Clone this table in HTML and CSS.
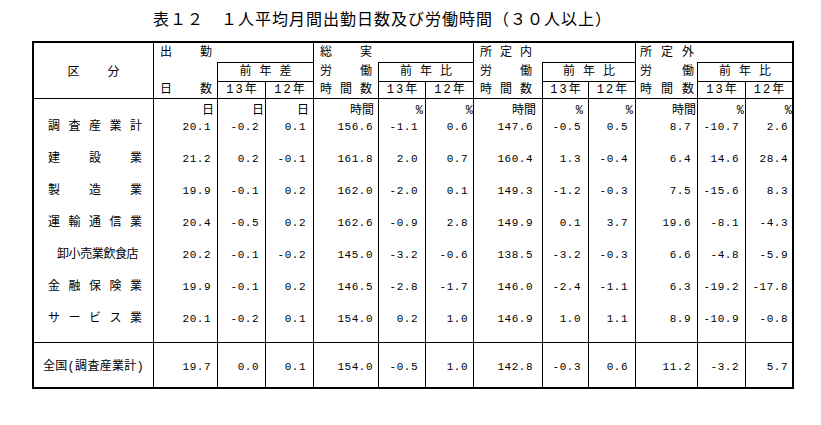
FILE: index.html
```html
<!DOCTYPE html>
<html lang="ja">
<head>
<meta charset="utf-8">
<title>表１２</title>
<link rel="stylesheet" href="styles.css">
</head>
<body>
<div class="page">
  <h1 class="title">表１２　１人平均月間出勤日数及び労働時間（３０人以上）</h1>
  <div class="tbl">
    <div class="kubun"><span>区</span><span>分</span></div>

    <div class="sub"><div class="ln"><span>出</span><span>勤</span></div><div class="ln"></div><div class="ln"><span>日</span><span>数</span></div></div>
    <div class="blank"></div>
    <div class="sub"><div class="ln"><span>総</span><span>実</span></div><div class="ln"><span>労</span><span>働</span></div><div class="ln"><span>時</span><span>間</span><span>数</span></div></div>
    <div class="blank"></div>
    <div class="sub"><div class="ln"><span>所</span><span>定</span><span>内</span></div><div class="ln"><span>労</span><span>働</span></div><div class="ln"><span>時</span><span>間</span><span>数</span></div></div>
    <div class="blank"></div>
    <div class="sub sub-last"><div class="ln"><span>所</span><span>定</span><span>外</span></div><div class="ln"><span>労</span><span>働</span></div><div class="ln"><span>時</span><span>間</span><span>数</span></div></div>
    <div class="blank"></div>

    <div class="cmp"><span>前</span><span>年</span><span>差</span></div>
    <div class="cmp"><span>前</span><span>年</span><span>比</span></div>
    <div class="cmp"><span>前</span><span>年</span><span>比</span></div>
    <div class="cmp"><span>前</span><span>年</span><span>比</span></div>

    <div class="yr">13年</div><div class="yr">12年</div>
    <div class="yr">13年</div><div class="yr">12年</div>
    <div class="yr">13年</div><div class="yr">12年</div>
    <div class="yr">13年</div><div class="yr">12年</div>

    <div class="col lab">
      <div class="u"></div>
      <div class="v"><span>調</span><span>査</span><span>産</span><span>業</span><span>計</span></div>
      <div class="v"><span>建</span><span>設</span><span>業</span></div>
      <div class="v"><span>製</span><span>造</span><span>業</span></div>
      <div class="v"><span>運</span><span>輸</span><span>通</span><span>信</span><span>業</span></div>
      <div class="v v-tight">卸小売業飲食店</div>
      <div class="v"><span>金</span><span>融</span><span>保</span><span>険</span><span>業</span></div>
      <div class="v"><span>サ</span><span>ー</span><span>ビ</span><span>ス</span><span>業</span></div>
    </div>
    <div class="col num u3"><div class="u">日</div><div class="v">20.1</div><div class="v">21.2</div><div class="v">19.9</div><div class="v">20.4</div><div class="v">20.2</div><div class="v">19.9</div><div class="v">20.1</div></div>
    <div class="col num u1"><div class="u">日</div><div class="v">-0.2</div><div class="v">0.2</div><div class="v">-0.1</div><div class="v">-0.5</div><div class="v">-0.1</div><div class="v">-0.1</div><div class="v">-0.2</div></div>
    <div class="col num u4 n7"><div class="u">日</div><div class="v">0.1</div><div class="v">-0.1</div><div class="v">0.2</div><div class="v">0.2</div><div class="v">-0.2</div><div class="v">0.2</div><div class="v">0.1</div></div>
    <div class="col num u4 n5"><div class="u">時間</div><div class="v">156.6</div><div class="v">161.8</div><div class="v">162.0</div><div class="v">162.6</div><div class="v">145.0</div><div class="v">146.5</div><div class="v">154.0</div></div>
    <div class="col num n7"><div class="u">%</div><div class="v">-1.1</div><div class="v">2.0</div><div class="v">-2.0</div><div class="v">-0.9</div><div class="v">-3.2</div><div class="v">-2.8</div><div class="v">0.2</div></div>
    <div class="col num u0 n5"><div class="u">%</div><div class="v">0.6</div><div class="v">0.7</div><div class="v">0.1</div><div class="v">2.8</div><div class="v">-0.6</div><div class="v">-1.7</div><div class="v">1.0</div></div>
    <div class="col num u6 n9"><div class="u">時間</div><div class="v">147.6</div><div class="v">160.4</div><div class="v">149.3</div><div class="v">149.9</div><div class="v">138.5</div><div class="v">146.0</div><div class="v">146.9</div></div>
    <div class="col num u5 n7"><div class="u">%</div><div class="v">-0.5</div><div class="v">1.3</div><div class="v">-1.2</div><div class="v">0.1</div><div class="v">-3.2</div><div class="v">-2.4</div><div class="v">1.0</div></div>
    <div class="col num n7"><div class="u">%</div><div class="v">0.5</div><div class="v">-0.4</div><div class="v">-0.3</div><div class="v">3.7</div><div class="v">-0.3</div><div class="v">-1.1</div><div class="v">1.1</div></div>
    <div class="col num u1"><div class="u">時間</div><div class="v">8.7</div><div class="v">6.4</div><div class="v">7.5</div><div class="v">19.6</div><div class="v">6.6</div><div class="v">6.3</div><div class="v">8.9</div></div>
    <div class="col num u1"><div class="u">%</div><div class="v">-10.7</div><div class="v">14.6</div><div class="v">-15.6</div><div class="v">-8.1</div><div class="v">-4.8</div><div class="v">-19.2</div><div class="v">-10.9</div></div>
    <div class="col num u0 n4"><div class="u">%</div><div class="v">2.6</div><div class="v">28.4</div><div class="v">8.3</div><div class="v">-4.3</div><div class="v">-5.9</div><div class="v">-17.8</div><div class="v">-0.8</div></div>

    <div class="tot tot-lab">全国(調査産業計)</div>
    <div class="tot">19.7</div>
    <div class="tot">0.0</div>
    <div class="tot n7">0.1</div>
    <div class="tot n5">154.0</div>
    <div class="tot n7">-0.5</div>
    <div class="tot n5">1.0</div>
    <div class="tot n9">142.8</div>
    <div class="tot n7">-0.3</div>
    <div class="tot n7">0.6</div>
    <div class="tot">11.2</div>
    <div class="tot">-3.2</div>
    <div class="tot n4">5.7</div>
  </div>
</div>
</body>
</html>
```

FILE: styles.css
```css
* {
  box-sizing: border-box;
  margin: 0;
  padding: 0;
}

html, body {
  background: #fff;
  color: #000;
}

body {
  font-family: "Noto Sans CJK JP", sans-serif;
}

.page {
  padding: 8px 0 0 32px;
}

.title {
  font-family: "Noto Sans CJK JP", sans-serif;
  font-size: 16px;
  font-weight: normal;
  line-height: 20px;
  letter-spacing: 1px;
  margin: 0 0 13px 121px;
  white-space: nowrap;
}

.tbl {
  display: grid;
  width: 762px;
  grid-template-columns: 119px 63px 47px 47px 64px 46px 47px 68px 45px 46px 61px 47px 46px;
  grid-template-rows: 19px 18px 16px 243px 44px;
  gap: 1px;
  background: #000;
  border: 2px solid #000;
  font-family: "Liberation Mono", "Noto Sans CJK JP", monospace;
  font-size: 12px;
  line-height: 16px;
}

.tbl > div {
  background: #fff;
}

/* header */
.kubun {
  grid-row: span 3;
  display: flex;
  justify-content: center;
  align-items: center;
  gap: 28px;
  padding-top: 4px;
}

.sub {
  grid-row: span 3;
  display: grid;
  grid-template-rows: 19px 19px 17px;
  align-items: center;
  padding-left: 6px;
}

.sub-last {
  padding-left: 4px;
}

.ln {
  display: flex;
  justify-content: space-between;
  width: 52px;
  height: 16px;
}

.sub-last .ln {
  width: 54px;
}

/* top-right cell of each group: merges with the group's first column */
.blank {
  grid-column: span 2;
  margin-left: -1px;
}

.cmp {
  grid-column: span 2;
  display: flex;
  justify-content: center;
  align-items: center;
  gap: 8px;
}

.yr {
  display: flex;
  justify-content: center;
  align-items: center;
  letter-spacing: 2px;
  padding-left: 2px;
}

/* body */
.col {
  padding-top: 4px;
}

.col .u {
  height: 16px;
  text-align: right;
  padding-right: 2px;
}

.col .v {
  height: 32px;
}

.num .v {
  text-align: right;
  padding-right: 6px;
  font-size: 11px;
  letter-spacing: 0.5px;
}

.lab .v {
  display: flex;
  justify-content: space-between;
  padding: 0 11px 0 14px;
}

.lab .v-tight {
  display: block;
  padding: 0 14px 0 23px;
  letter-spacing: -0.4px;
}

.u0 .u { padding-right: 0; }
.u1 .u { padding-right: 1px; }
.u3 .u { padding-right: 3px; }
.u4 .u { padding-right: 4px; }
.u5 .u { padding-right: 5px; }
.u6 .u { padding-right: 6px; }

.num.n4 .v { padding-right: 4px; }
.num.n5 .v { padding-right: 5px; }
.num.n7 .v { padding-right: 7px; }
.num.n9 .v { padding-right: 9px; }

.tot {
  padding: 16px 6px 0 0;
  text-align: right;
  font-size: 11px;
  letter-spacing: 0.5px;
}

.tot.n4 { padding-right: 4px; }
.tot.n5 { padding-right: 5px; }
.tot.n7 { padding-right: 7px; }
.tot.n9 { padding-right: 9px; }

.tot-lab {
  text-align: left;
  padding-left: 9px;
  font-size: 12px;
  letter-spacing: 0.3px;
}
```
